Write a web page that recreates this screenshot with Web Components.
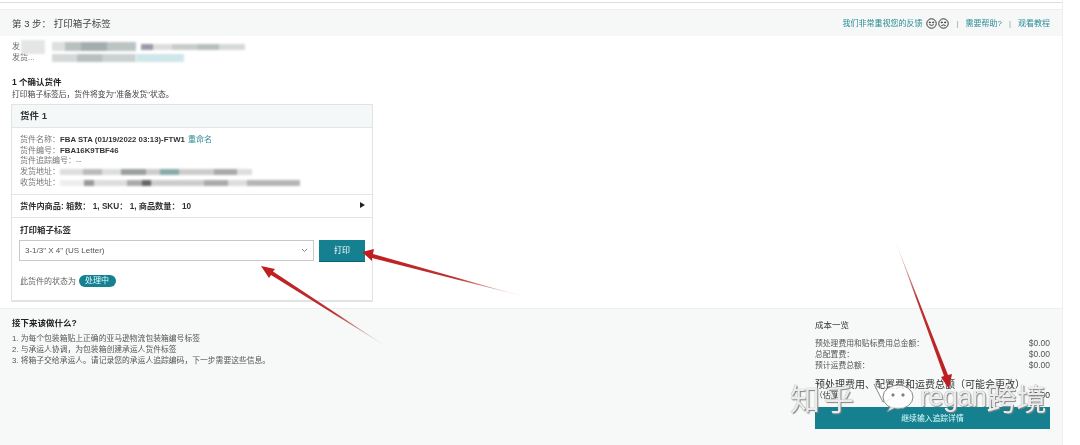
<!DOCTYPE html>
<html lang="zh"><head><meta charset="utf-8">
<style>
html,body{margin:0;padding:0;background:#fff;overflow:hidden}
body{font:8px/11px "Liberation Sans","Noto Sans CJK SC",sans-serif;color:#444}
</style></head><body>
<template id="t-page">
<style>
:host{display:block;position:relative;width:1080px;height:445px;overflow:hidden;background:#fff;filter:blur(.35px)}
.wrap{width:1062px;height:445px;border-right:1px solid #eee;display:flex;flex-direction:column}
.top{height:2px;border-bottom:1px solid #ddd;margin-bottom:6px;flex:none}
.mid{flex:1;min-height:0}
.overlay{position:absolute;left:0;top:0}
</style>
<div class="wrap"><div class="top"></div><step-header></step-header><div class="mid"><slot></slot></div><next-footer></next-footer></div>
<svg class="overlay" width="1080" height="445" viewBox="0 0 1080 445">
<defs>
<linearGradient id="a1" gradientUnits="userSpaceOnUse" x1="522" y1="296" x2="362" y2="252"><stop offset="0" stop-color="#c98" stop-opacity=".2"/><stop offset=".4" stop-color="#b33"/><stop offset="1" stop-color="#c01c20"/></linearGradient>
<linearGradient id="a2" gradientUnits="userSpaceOnUse" x1="387" y1="347" x2="262" y2="267"><stop offset="0" stop-color="#c98" stop-opacity=".2"/><stop offset=".4" stop-color="#b33"/><stop offset="1" stop-color="#c01c20"/></linearGradient>
<linearGradient id="a3" gradientUnits="userSpaceOnUse" x1="895" y1="240" x2="948" y2="385"><stop offset="0" stop-color="#c98" stop-opacity=".2"/><stop offset=".4" stop-color="#b33"/><stop offset="1" stop-color="#c01c20"/></linearGradient>
</defs>
<polygon fill="url(#a1)" points="522,296 372,258 372,261 362,252 374,249 373,254"/>
<polygon fill="url(#a2)" points="387,347 271,275 269,278 261,266 275,269 273,271.500"/>
<polygon fill="url(#a3)" points="895,240 944,376 941,377 949,389 952,374 948,375"/>
</svg>
<water-mark></water-mark>
</template>

<template id="t-header">
<style>
:host{display:flex;align-items:center;justify-content:space-between;height:27px;background:#f6f8f8;border-top:1px solid #eee;box-sizing:border-box;padding:0 12px;color:#444;flex:none}
.t{font-size:9.5px}
.r{display:flex;align-items:center;font-size:8px;color:#2b8a94}
.sm{display:inline-flex;gap:1px;margin:0 0 0 4px}
.sep{color:#999;margin:0 7px}
</style>
<span class="t">第 3 步： 打印箱子标签</span>
<span class="r">我们非常重视您的反馈<span class="sm">
<svg width="11" height="11" viewBox="0 0 10 10" fill="none" stroke="#333" stroke-width=".9"><circle cx="5" cy="5" r="4.300"/><circle cx="3.500" cy="4" r=".5" fill="#333"/><circle cx="6.500" cy="4" r=".5" fill="#333"/><path d="M3 6q2 1.500 4 0"/></svg>
<svg width="11" height="11" viewBox="0 0 10 10" fill="none" stroke="#333" stroke-width=".9"><circle cx="5" cy="5" r="4.300"/><circle cx="3.500" cy="4" r=".5" fill="#333"/><circle cx="6.500" cy="4" r=".5" fill="#333"/><path d="M3 7q2-1.500 4 0"/></svg>
</span><span class="sep">|</span>需要帮助?<span class="sep">|</span>观看教程</span>
</template>

<template id="t-smear">
<style>
:host{display:inline-block;vertical-align:middle;height:8px;filter:blur(1.1px);background:var(--bg,#bbb)}
</style>
</template>

<template id="t-sender">
<style>
:host{display:block;padding:5px 12px 0;height:40px;box-sizing:border-box;font-size:8px;line-height:11px;color:#666;white-space:nowrap}
.row{display:flex;align-items:center;height:11px}
</style>
<div class="row"><span style="width:9px;flex:none">发</span><blur-smear style="width:24px;height:14px;flex:none;--bg:#e4e6e6"></blur-smear><span style="width:7px;flex:none"></span><blur-smear style="width:84px;height:9px;--bg:linear-gradient(90deg,#dde0e0 0 15%,#b9c0c0 15% 35%,#a3adad 35% 65%,#bcc3c3 65% 100%)"></blur-smear><blur-smear style="width:104px;height:6px;margin-left:5px;--bg:linear-gradient(90deg,#99a 0 12%,#ddd 12% 30%,#c8cccc 30% 55%,#b8bebe 55% 75%,#d6d9d9 75% 100%)"></blur-smear></div>
<div class="row"><span style="width:22px;flex:none;overflow:hidden">发货...</span><span style="width:18px;flex:none"></span><blur-smear style="width:84px;height:8px;--bg:linear-gradient(90deg,#d4d8d8 0 30%,#b8bfbf 30% 60%,#cbd0d0 60% 100%)"></blur-smear><blur-smear style="width:48px;height:8px;--bg:#cfe6ea"></blur-smear></div>
</template>

<template id="t-intro">
<style>
:host{display:block;padding:0 12px;font-size:7.8px;line-height:13px;color:#444}
b{display:block;color:#222;font-size:8.5px;line-height:12px}
</style>
<b>1 个确认货件</b>打印箱子标签后，货件将变为"准备发货"状态。
</template>

<template id="t-card">
<style>
:host{width:362px;height:198px;box-sizing:border-box;margin:3px 0 0 11px;border:1px solid #e2e4e4;border-bottom-width:2px;display:flex;flex-direction:column}
.h{height:23px;flex:none;background:#f5f8f8;border-bottom:1px solid #e4e6e6;font:bold 9.5px/22px "Liberation Sans","Noto Sans CJK SC",sans-serif;color:#333;padding-left:8px;box-sizing:border-box}
</style>
<div class="h">货件 1</div><slot></slot>
</template>

<template id="t-details">
<style>
:host{display:block;height:67px;flex:none;box-sizing:border-box;padding:7px 8px 0;border-bottom:1px solid #e4e6e6;font-size:8px;line-height:10.700px;color:#777}
.row{display:flex;align-items:center;height:10.700px;white-space:nowrap}
.k{width:40px;flex:none}
b{color:#333;font-size:7.8px}
a{color:#2b8a94;margin-left:3px}
</style>
<div class="row"><span class="k">货件名称：</span><b>FBA STA (01/19/2022 03:13)-FTW1</b><a>重命名</a></div>
<div class="row"><span class="k">货件编号：</span><b>FBA16K9TBF46</b></div>
<div class="row"><span class="k" style="width:56px">货件追踪编号：</span><span>--</span></div>
<div class="row"><span class="k">发货地址：</span><blur-smear style="width:192px;height:6px;--bg:linear-gradient(90deg,#ddd 0 12%,#bbb 12% 22%,#ddd 22% 32%,#9a9f9f 32% 45%,#ccc 45% 52%,#8aa 52% 62%,#ccc 62% 80%,#aaa 80% 92%,#ddd 92% 100%)"></blur-smear></div>
<div class="row"><span class="k">收货地址：</span><blur-smear style="width:240px;height:6px;--bg:linear-gradient(90deg,#eee 0 10%,#999 10% 14%,#ddd 14% 28%,#aaa 28% 34%,#666 34% 38%,#ccc 38% 60%,#aaa 60% 70%,#ddd 70% 78%,#b5b5b5 78% 100%)"></blur-smear></div>
</template>

<template id="t-summary">
<style>
:host{display:flex;height:23px;flex:none;box-sizing:border-box;align-items:center;justify-content:space-between;padding:0 7px 2px 8px;border-bottom:1px solid #e4e6e6;font:bold 8.2px "Liberation Sans","Noto Sans CJK SC",sans-serif;color:#333}
i{width:0;height:0;border-left:5px solid #222;border-top:3px solid transparent;border-bottom:3px solid transparent}
</style>
<span>货件内商品: 箱数： 1, SKU： 1, 商品数量： 10</span><i></i>
</template>

<template id="t-print">
<style>
:host{display:block;padding:7px 7px 0;font-size:8px;color:#444}
.l{font-weight:bold;color:#333;line-height:11px;font-size:8.5px;padding-left:1px}
.c{display:flex;gap:5px;margin-top:4px}
.sel{flex:1;height:21px;box-sizing:border-box;border:1px solid #c8c8c8;background:#fff;display:flex;align-items:center;justify-content:space-between;padding:0 5px;color:#555}
.btn{width:46px;height:21px;background:#15808f;color:#fff;display:flex;align-items:center;justify-content:center;box-shadow:0 1px 0 #0b6270}
.s{margin-top:14px;display:flex;align-items:center;gap:3px;color:#666;padding-left:1px}
.badge{background:#15808f;color:#dff;border-radius:6px;padding:0 7px 0 6px;height:12px;line-height:12px}
</style>
<div class="l">打印箱子标签</div>
<div class="c"><div class="sel"><span>3-1/3" X 4" (US Letter)</span><svg width="7" height="5" viewBox="0 0 7 5" fill="none" stroke="#888"><path d="M1 1l2.500 2.500L6 1"/></svg></div><div class="btn">打印</div></div>
<div class="s">此货件的状态为<span class="badge">处理中</span></div>
</template>

<template id="t-footer">
<style>
:host{display:flex;justify-content:space-between;height:137px;flex:none;background:#f7f8f8;border-top:1px solid #eee;box-sizing:border-box;padding:8px 12px 0;font-size:7.8px;line-height:11px;color:#555}
.l b{display:block;color:#222;margin-bottom:4px;line-height:12px;font-size:8.5px}
.c{width:235px;margin-top:2px}
.c .t{color:#333;line-height:12px;margin-bottom:7px;font-size:8.5px}
.row{display:flex;justify-content:space-between;height:11px}
.v{font-size:8.5px}
.dim{margin-top:8px;height:20px;color:#333}
.big{font-size:10px}
.btn{height:22px;background:#15808f;color:#dff;display:flex;align-items:center;justify-content:center;margin-top:8px}
</style>
<div class="l"><b>接下来该做什么?</b>1. 为每个包装箱贴上正确的亚马逊物流包装箱编号标签<br>2. 与承运人协调，为包装箱创建承运人货件标签<br>3. 将箱子交给承运人。请记录您的承运人追踪编码，下一步需要这些信息。</div>
<div class="c"><div class="t">成本一览</div>
<div class="row"><span>预处理费用和贴标费用总金额：</span><span class="v">$0.00</span></div>
<div class="row"><span>总配置费：</span><span class="v">$0.00</span></div>
<div class="row"><span>预计运费总额：</span><span class="v">$0.00</span></div>
<div class="dim"><div class="row big"><span>预处理费用、配置费和运费总额（可能会更改）</span></div><div class="row"><span>（估算）</span><span class="v">$0.00</span></div></div>
<div class="btn">继续输入追踪详情</div></div>
</template>

<template id="t-water">
<style>
:host{position:absolute;left:790px;top:379px;width:265px;height:36px;display:flex;align-items:center;white-space:nowrap;font:30px/36px "Noto Sans CJK SC","Liberation Sans",sans-serif;color:rgba(255,255,255,.85);text-shadow:0 0 1px #777,1px 1px 1px #888}
.z{width:80px;letter-spacing:4px}
svg{flex:none}
.n{font:27px/36px "Liberation Sans",sans-serif;letter-spacing:-.5px}
</style>
<span class="z">知乎</span>
<svg width="50" height="34" viewBox="0 0 50 34" fill="rgba(255,255,255,.85)" stroke="#888" stroke-width="1"><path d="M4 4l9 18 8-3"/><ellipse cx="28" cy="17" rx="15" ry="12"/><path d="M20 27l-3 5 8-4"/><circle cx="23" cy="15" r="1.200" fill="#777"/><circle cx="33" cy="15" r="1.200" fill="#777"/></svg>
<span class="n">regan</span><span>跨境</span>
</template>

<ship-page>
<sender-info></sender-info>
<intro-text></intro-text>
<ship-card>
<ship-details></ship-details>
<ship-summary></ship-summary>
<print-box></print-box>
</ship-card>
</ship-page>

<script>
const map={'ship-page':'t-page','step-header':'t-header','blur-smear':'t-smear','sender-info':'t-sender','intro-text':'t-intro','ship-card':'t-card','ship-details':'t-details','ship-summary':'t-summary','print-box':'t-print','next-footer':'t-footer','water-mark':'t-water'};
for(const [n,t] of Object.entries(map)){
 customElements.define(n,class extends HTMLElement{constructor(){super();this.attachShadow({mode:'open'}).appendChild(document.getElementById(t).content.cloneNode(true));}});
}
</script>
</body></html>
